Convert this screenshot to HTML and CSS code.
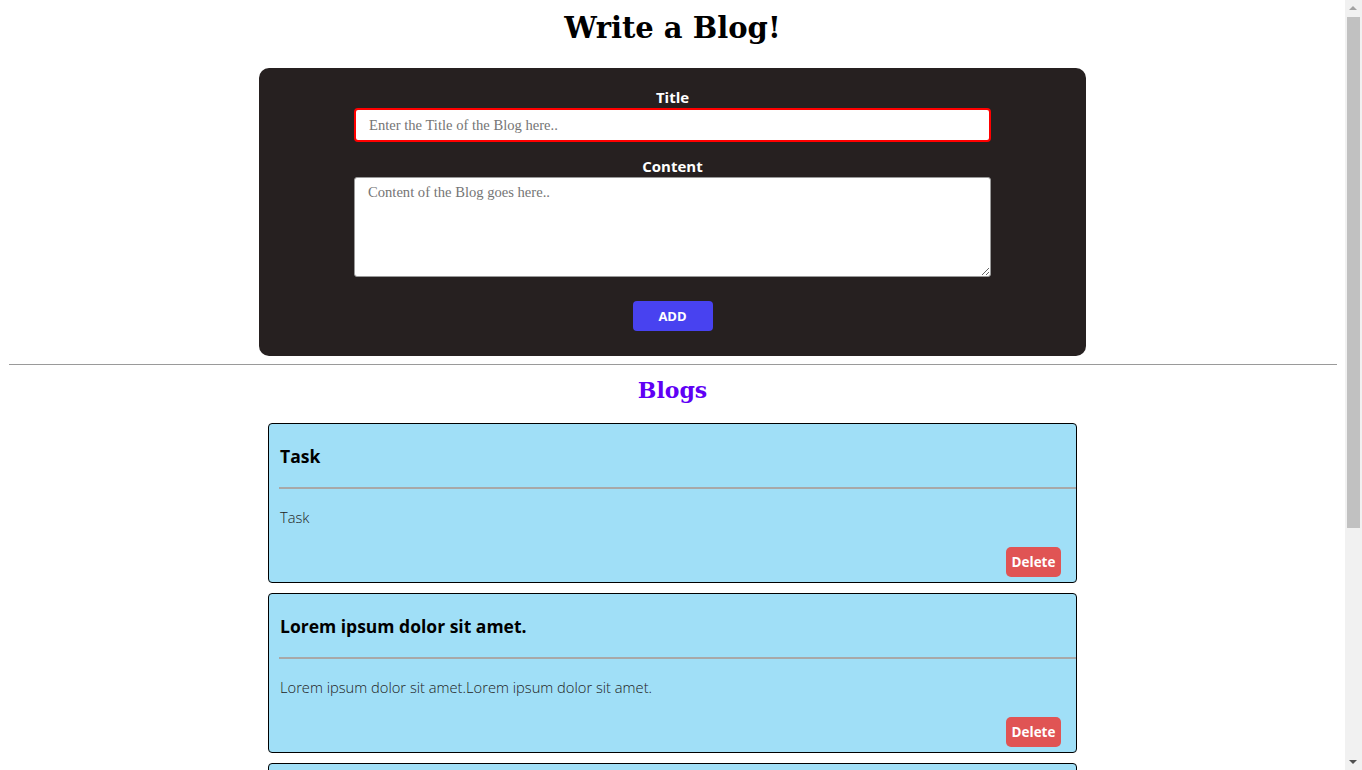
FILE: index.html
```html
<!DOCTYPE html>
<html>
<head>
<meta charset="utf-8">
<link rel="stylesheet" href="styles.css">
</head>
<body>
<h1 class="page-title">Write a Blog!</h1>
<form class="editor">
  <label class="field-label" for="title">Title</label>
  <input class="title-input" id="title" type="text" placeholder="Enter the Title of the Blog here..">
  <label class="field-label" for="content">Content</label>
  <textarea class="content-input" id="content" placeholder="Content of the Blog goes here.."></textarea>
  <button class="add-btn" type="button">ADD</button>
</form>
<hr class="divider">
<h2 class="blogs-title">Blogs</h2>
<div class="blog-list">
  <div class="blog-card">
    <h3 class="blog-heading">Task</h3>
    <hr class="blog-rule">
    <p class="blog-body">Task</p>
    <div class="blog-actions"><button class="delete-btn" type="button">Delete</button></div>
  </div>
  <div class="blog-card">
    <h3 class="blog-heading">Lorem ipsum dolor sit amet.</h3>
    <hr class="blog-rule">
    <p class="blog-body">Lorem ipsum dolor sit amet.Lorem ipsum dolor sit amet.</p>
    <div class="blog-actions"><button class="delete-btn" type="button">Delete</button></div>
  </div>
  <div class="blog-card">
    <h3 class="blog-heading">Lorem ipsum</h3>
    <hr class="blog-rule">
    <p class="blog-body">Lorem ipsum dolor sit amet.</p>
    <div class="blog-actions"><button class="delete-btn" type="button">Delete</button></div>
  </div>
</div>
<div class="scrollbar">
  <div class="scroll-arrow up"></div>
  <div class="scroll-thumb"></div>
  <div class="scroll-arrow down"></div>
</div>
</body>
</html>
```
FILE: styles.css
```css
html { overflow: hidden; }
body {
  margin: 8px 25px 8px 8px;
  font-family: "Liberation Serif", serif;
  background: #fff;
}
.page-title {
  font-family: "DejaVu Serif", serif;
  font-weight: bold;
  font-size: 29px;
  text-align: center;
  margin: 0 0 20px;
  line-height: 40px;
}
.editor {
  width: 827px;
  margin: 0 auto;
  box-sizing: border-box;
  background: #262020;
  border-radius: 10px;
  padding: 19px 0 25px;
  display: flex;
  flex-direction: column;
  align-items: center;
}
.field-label {
  color: #fff;
  font-family: "Open Sans", sans-serif;
  font-weight: 700;
  font-size: 15px;
  line-height: 20px;
  margin-bottom: 1px;
}
.title-input, .content-input {
  width: 637px;
  box-sizing: border-box;
  font-family: "Liberation Serif", serif;
  font-size: 14.6px;
  padding: 0 13px;
  background: #fff;
  outline: none;
}
.title-input {
  height: 34px;
  border: 2px solid #ff0000;
  border-radius: 4px;
  margin-bottom: 14px;
}
.content-input {
  height: 100px;
  border: 1px solid #999;
  border-radius: 3px;
  padding-top: 6px;
  resize: vertical;
  margin-bottom: 24px;
}
::placeholder { color: #757575; }
.add-btn {
  width: 80px;
  height: 30px;
  border: none;
  border-radius: 4px;
  background: #4842f0;
  color: #fff;
  font-family: "Open Sans", sans-serif;
  font-weight: 700;
  font-size: 13px;
}
.divider {
  margin: 8px 0 0 1px;
  border: none;
  border-top: 1px solid #9a9a9a;
  height: 0;
}
.blogs-title {
  font-family: "DejaVu Serif", serif;
  font-weight: bold;
  font-size: 22px;
  color: #6000f5;
  text-align: center;
  margin: 10px 0 18px;
  line-height: 30px;
}
.blog-list {
  width: 809px;
  margin: 0 auto;
  display: flex;
  flex-direction: column;
  gap: 10px;
}
.blog-card {
  box-sizing: border-box;
  height: 160px;
  flex-shrink: 0;
  background: #a0dff7;
  border: 1px solid #000;
  border-radius: 4px;
  padding: 0 0 0 10px;
  display: flex;
  flex-direction: column;
}
.blog-heading {
  font-family: "Open Sans", sans-serif;
  font-weight: 700;
  font-size: 17.5px;
  margin: 20px 0 0 1px;
  line-height: 24px;
  color: #000;
}
.blog-rule {
  margin: 19px 0 0;
  border: none;
  border-top: 2px solid #a8a8a8;
  height: 0;
  width: 100%;
}
.blog-body {
  font-family: "Open Sans", sans-serif;
  font-weight: 300;
  font-size: 14.7px;
  margin: 18px 0 0 1px;
  line-height: 20px;
  color: #222;
}
.blog-actions {
  display: flex;
  justify-content: flex-end;
  margin-top: auto;
  padding: 0 15px 5px 0;
}
.delete-btn {
  width: 55px;
  height: 30px;
  border: none;
  border-radius: 5px;
  background: #e05454;
  color: #fff;
  font-family: "Open Sans", sans-serif;
  font-weight: 700;
  font-size: 13.5px;
  padding: 0;
}
.scrollbar {
  position: fixed;
  top: 0;
  right: 0;
  width: 17px;
  height: 100%;
  background: #f1f1f1;
  display: flex;
  flex-direction: column;
  align-items: center;
}
.scroll-arrow {
  height: 17px;
  width: 17px;
  flex-shrink: 0;
  position: relative;
}
.scroll-arrow::after {
  content: "";
  position: absolute;
  left: 4px;
  border-left: 4px solid transparent;
  border-right: 4px solid transparent;
}
.scroll-arrow.up::after {
  top: 6px;
  border-bottom: 4px solid #a3a3a3;
}
.scroll-arrow.down::after {
  top: 7px;
  border-top: 4px solid #505050;
}
.scroll-thumb {
  width: 13px;
  height: 511px;
  background: #c1c1c1;
  margin-bottom: auto;
}
```
